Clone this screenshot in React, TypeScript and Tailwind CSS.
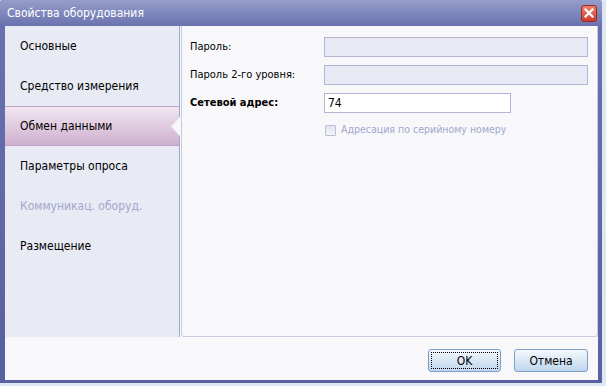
import React from "react";

const font = { fontFamily: '"DejaVu Sans Condensed", "DejaVu Sans", sans-serif' };

function SideItem({ label, selected, disabled }: { label: string; selected?: boolean; disabled?: boolean }) {
  if (selected) {
    return (
      <div className="relative h-[40px] flex items-center pl-[15px] border-y border-[#bfa3c6] bg-gradient-to-b from-[#f1e7f1] to-[#cfb0cf] text-[12px] text-black">
        {label}
        <svg className="absolute right-[-1px] top-[10px]" width="9" height="19" viewBox="0 0 9 19">
          <polygon points="9,0 0,9.5 9,19" fill="#f8f8fb" />
          <polyline points="9,0 0,9.5 9,19" fill="none" stroke="#e4e0ec" strokeWidth="0.8" />
        </svg>
      </div>
    );
  }
  return (
    <div className={`h-[40px] flex items-center pl-[15px] text-[12px] ${disabled ? "text-[#a3a7cc]" : "text-black"}`}>
      {label}
    </div>
  );
}

function Row({ label, bold, children }: { label: string; bold?: boolean; children: React.ReactNode }) {
  return (
    <div className="flex items-center h-[20px]">
      <div className={`w-[134px] text-[11px] text-black ${bold ? "font-bold" : ""}`}>{label}</div>
      {children}
    </div>
  );
}

export default function App() {
  return (
    <div className="w-[606px] h-[386px] bg-[#dfe7f3] overflow-hidden" style={font}>
      <div className="w-[602px] h-[383px] flex flex-col bg-gradient-to-b from-[#6a73b0] to-[#5761a0] pl-[5px] pr-[4px] pb-[3px] rounded-t-[3px]">
        {/* title bar */}
        <div className="h-[26px] -ml-[5px] -mr-[4px] flex items-center justify-between pl-[7px] pr-[5px] bg-gradient-to-b from-[#959dca] to-[#6a73ae] rounded-t-[3px]">
          <span className="text-white text-[12px] leading-none">Свойства оборудования</span>
          <div className="w-[16px] h-[17px] rounded-[3px] border border-[#9c2a22] bg-gradient-to-b from-[#ee7f70] to-[#cc3a2c] flex items-center justify-center">
            <svg width="10" height="10" viewBox="0 0 10 10">
              <path d="M1.5 1.5 L8.5 8.5 M8.5 1.5 L1.5 8.5" stroke="white" strokeWidth="2.2" strokeLinecap="square" />
            </svg>
          </div>
        </div>
        {/* body */}
        <div className="flex-1 flex flex-col bg-[#f8f8fb]">
          <div className="h-[311px] flex">
            <div className="w-[175px] bg-[#e8eaf4] border-r border-[#a3a9cd] flex flex-col">
              <SideItem label="Основные" />
              <SideItem label="Средство измерения" />
              <SideItem label="Обмен данными" selected />
              <SideItem label="Параметры опроса" />
              <SideItem label="Коммуникац. оборуд." disabled />
              <SideItem label="Размещение" />
            </div>
            <div className="flex-1 ml-[1px] bg-[#f8f8fb] border-r border-b border-l border-[#c9cce0] rounded-b-[3px] pl-[8px] pt-[11px] flex flex-col gap-[8px]">
              <Row label="Пароль:">
                <div className="w-[264px] h-[20px] bg-[#e8e9f3] border border-[#b2b6d6]" />
              </Row>
              <Row label="Пароль 2-го уровня:">
                <div className="w-[264px] h-[20px] bg-[#e8e9f3] border border-[#b2b6d6]" />
              </Row>
              <Row label="Сетевой адрес:" bold>
                <div className="w-[187px] h-[20px] bg-white border border-[#b2b6d6] flex items-center pl-[3px] text-[12px] text-black">74</div>
              </Row>
              <div className="flex items-center h-[12px] mt-[3px] pl-[135px] gap-[5px]">
                <div className="w-[11px] h-[11px] border border-[#b9bdd8] rounded-[1px] bg-gradient-to-b from-[#e4e5ee] to-[#f2f2f7]" />
                <span className="text-[10.5px] text-[#a3a7cc]">Адресация по серийному номеру</span>
              </div>
            </div>
          </div>
          <div className="flex-1 flex justify-end items-start pt-[12px] pr-[10px] gap-[13px]">
            <button className="w-[73px] h-[23px] rounded-[3px] border border-[#7e9fc9] bg-gradient-to-b from-[#f4f8fc] to-[#bfd6ee] p-[2px]">
              <div className="w-full h-full border border-dotted border-black flex items-center justify-center text-[12px] text-black">OK</div>
            </button>
            <button className="w-[74px] h-[23px] rounded-[3px] border border-[#7e9fc9] bg-gradient-to-b from-[#f4f8fc] to-[#bfd6ee] flex items-center justify-center text-[12px] text-black">
              Отмена
            </button>
          </div>
        </div>
      </div>
    </div>
  );
}
